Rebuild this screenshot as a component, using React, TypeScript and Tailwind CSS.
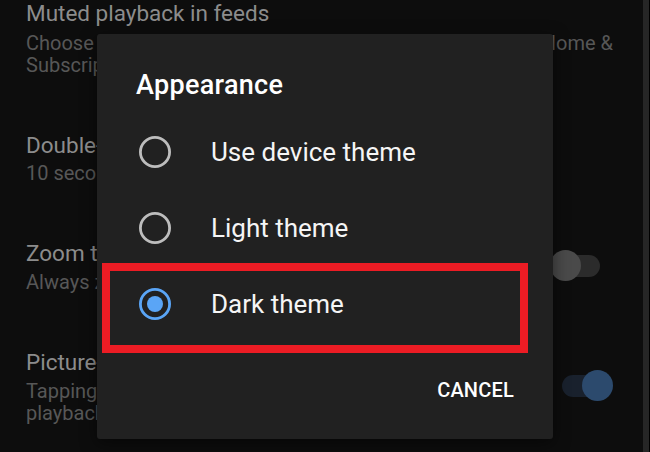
import React from "react";

function Toggle({ on }: { on: boolean }) {
  return (
    <div className="relative w-[63px] h-[31px] shrink-0">
      <div
        className={
          on
            ? "absolute left-[12px] right-[13px] top-[4.5px] h-[22px] rounded-full bg-[#19212d]"
            : "absolute left-[12px] right-[13px] top-[4.5px] h-[22px] rounded-full bg-[#2b2b2b]"
        }
      />
      <div
        className={
          on
            ? "absolute right-0 top-0 w-[31px] h-[31px] rounded-full bg-[#2c4a6d]"
            : "absolute left-0 top-0 w-[31px] h-[31px] rounded-full bg-[#4a4a4a]"
        }
      />
    </div>
  );
}

function Radio({ checked }: { checked: boolean }) {
  return (
    <svg width="34" height="34" viewBox="0 0 34 34" className="shrink-0">
      {checked ? (
        <>
          <circle cx="17" cy="17" r="14.6" fill="none" stroke="#5aa5f6" strokeWidth="2.8" />
          <circle cx="17" cy="17" r="8" fill="#5aa5f6" />
        </>
      ) : (
        <circle cx="17" cy="17" r="14.6" fill="none" stroke="#bdbdbd" strokeWidth="2.8" />
      )}
    </svg>
  );
}

export default function App() {
  const options = [
    { label: "Use device theme", checked: false },
    { label: "Light theme", checked: false },
    { label: "Dark theme", checked: true },
  ];
  return (
    <div
      className="relative w-[650px] h-[452px] overflow-hidden bg-black flex"
      style={{ fontFamily: "Roboto, 'Noto Sans', sans-serif" }}
    >
      {/* background settings list (dimmed) */}
      <div className="flex-1 h-full bg-[#0d0d0d] pl-[26px] pr-[30px]">
        <div className="flex flex-col gap-[54px] mt-[-2px]">
          <div className="flex flex-col">
            <div className="text-[22.5px] leading-[30px] text-[#8c8c8c]">Muted playback in feeds</div>
            <div className="mt-[4px] text-[20px] leading-[22px] text-[#575757]">
              <div className="flex justify-between">
                <span>Choose whether videos play muted in</span>
                <span>Home &amp;</span>
              </div>
              <div>Subscriptions</div>
            </div>
          </div>
          <div className="flex flex-col">
            <div className="text-[22.5px] leading-[30px] text-[#8c8c8c]">Double-tap to seek</div>
            <div className="mt-[2px] text-[20px] leading-[22px] text-[#575757]">10 seconds</div>
          </div>
          <div className="flex items-center justify-between">
            <div className="flex flex-col">
              <div className="text-[22.5px] leading-[30px] text-[#8c8c8c]">Zoom to fill screen</div>
              <div className="mt-[3px] text-[20px] leading-[22px] text-[#575757]">Always zoom to fill</div>
            </div>
            <Toggle on={false} />
          </div>
          <div className="flex items-center justify-between">
            <div className="flex flex-col">
              <div className="text-[22.5px] leading-[30px] text-[#8c8c8c]">Picture-in-picture</div>
              <div className="mt-[3px] text-[20px] leading-[22px] text-[#575757]">
                <div>Tapping home while watching starts</div>
                <div>playback in a small window</div>
              </div>
            </div>
            <Toggle on={true} />
          </div>
        </div>
      </div>
      <div className="w-[6px] h-full bg-[#262626]" />
      <div className="w-[1px] h-full bg-black" />

      {/* dialog */}
      <div className="absolute left-[97px] top-[34px] w-[456px] h-[405px] rounded-[3px] bg-[#212121] shadow-[0_4px_16px_rgba(0,0,0,0.5)] flex flex-col pt-[36px] pl-[39px] pr-[39px]">
        <div className="text-[27px] leading-[30px] font-medium text-white tracking-[0.3px]">Appearance</div>
        <div className="mt-[14px] flex flex-col">
          {options.map((o) => (
            <div key={o.label} className="h-[76px] flex items-center pl-[2px] gap-[39px]">
              <Radio checked={o.checked} />
              <span className="text-[26px] leading-[30px] text-[#f5f5f5]">{o.label}</span>
            </div>
          ))}
        </div>
        <div className="mt-[36px] flex justify-end">
          <span className="text-[20px] leading-[24px] font-medium text-white tracking-[0.2px]">CANCEL</span>
        </div>
        <div className="absolute left-[5px] top-[229px] w-[426px] h-[90px] border-[8px] border-[#ec1c24]" />
      </div>
    </div>
  );
}
